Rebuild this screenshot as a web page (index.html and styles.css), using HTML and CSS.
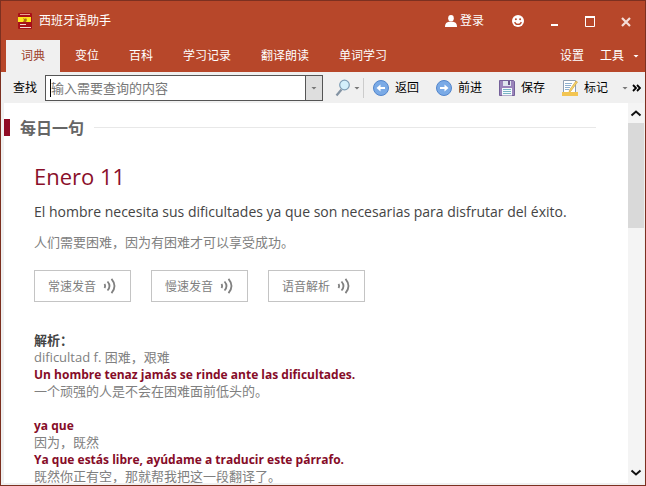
FILE: index.html
```html
<!DOCTYPE html>
<html lang="zh-CN">
<head>
<meta charset="utf-8">
<title>西班牙语助手</title>
<link rel="stylesheet" href="styles.css">
</head>
<body>
<div class="window">
  <header class="titlebar">
    <svg class="logo" width="14" height="16" viewBox="0 0 14 16" aria-hidden="true"><rect width="14" height="16" rx="1" fill="#a80f18"/><path d="M2 1.500h10" stroke="#e8a090"/><rect y="4" width="13" height="5" fill="#ffe51c"/><path d="M5 5l2 1 1-1 1 2-1 2H5l1-2z" fill="#b06a12"/><path d="M2 11.500h6M2 14.500h11" stroke="#f3d8d0"/></svg>
    <h1 class="app-name">西班牙语助手</h1>
    <button class="login" type="button"><svg width="12" height="12" viewBox="0 0 12 12" aria-hidden="true"><ellipse cx="6" cy="3.200" rx="2.800" ry="3.200" fill="#fff"/><path d="M0 12c0-4 2-5 4-5.300h4c2 .3 4 1.300 4 5.300z" fill="#fff"/></svg>登录</button>
    <div class="controls">
      <button type="button" aria-label="反馈"><svg width="12" height="12" viewBox="0 0 12 12"><circle cx="6" cy="6" r="6" fill="#fff"/><circle cx="3.900" cy="4.300" r="1" fill="#b7472a"/><circle cx="8.100" cy="4.300" r="1" fill="#b7472a"/><path d="M2.700 7c.8 3.200 5.800 3.200 6.600 0" fill="none" stroke="#b7472a" stroke-width="1.200"/></svg></button>
      <button type="button" aria-label="最小化"><svg width="12" height="12" viewBox="0 0 12 12"><path d="M3 10h7" stroke="#fff" stroke-width="2"/></svg></button>
      <button type="button" aria-label="最大化"><svg width="12" height="12" viewBox="0 0 12 12"><path d="M1.500 2v9.500h9V2" fill="none" stroke="#fff"/><path d="M1 2h10" stroke="#fff" stroke-width="2"/></svg></button>
      <button type="button" aria-label="关闭"><svg width="12" height="12" viewBox="0 0 12 12"><path d="M2 3l8 8M10 3l-8 8" stroke="#f5ded8" stroke-width="2.200"/></svg></button>
    </div>
  </header>
  <nav class="tabs">
    <a class="tab active" href="#dict">词典</a>
    <a class="tab" href="#verb">变位</a>
    <a class="tab" href="#wiki">百科</a>
    <a class="tab" href="#log">学习记录</a>
    <a class="tab" href="#read">翻译朗读</a>
    <a class="tab" href="#words">单词学习</a>
    <div class="menu">
      <button type="button">设置</button>
      <button type="button">工具<span class="caret light"></span></button>
    </div>
  </nav>
  <div class="toolbar">
    <label for="query">查找</label>
    <div class="combo">
      <span class="cursor"></span>
      <input id="query" type="text" placeholder="输入需要查询的内容">
      <button type="button" aria-label="历史"><span class="caret"></span></button>
    </div>
    <button class="search" type="button" aria-label="搜索"><svg width="16" height="18" viewBox="0 0 16 18"><path d="M6.500 10.500L1.500 16.500" stroke="#8393a3" stroke-width="2.200"/><circle cx="9.500" cy="6" r="4.800" fill="#d3effb" stroke="#7e9db5" stroke-width="1.200"/></svg><span class="caret"></span></button>
    <div class="actions">
      <button type="button"><svg width="16" height="16" viewBox="0 0 16 16" aria-hidden="true"><circle cx="8" cy="8" r="7.500" fill="#7aaae6" stroke="#5285cb"/><path d="M3.500 8l4-3.500V7H12v2H7.500v2.500z" fill="#fff"/></svg>返回</button>
      <button type="button"><svg width="16" height="16" viewBox="0 0 16 16" aria-hidden="true"><circle cx="8" cy="8" r="7.500" fill="#7aaae6" stroke="#5285cb"/><path d="M12.500 8l-4-3.500V7H4v2h4.500v2.500z" fill="#fff"/></svg>前进</button>
      <button type="button"><svg width="16" height="16" viewBox="0 0 16 16" aria-hidden="true"><path d="M.5.5h14l1 1v14H.5z" fill="#9a84bb" stroke="#74619a"/><path d="M4 1h8v5H4z" fill="#dfe6ee"/><path d="M9 1h2v4H9z" fill="#67578a"/><path d="M3 8h10v7.500H3z" fill="#f4fbfd"/><path d="M4 9.500h8M4 11.500h8M4 13.500h8" stroke="#79b4c4"/></svg>保存</button>
      <button type="button"><svg width="16" height="16" viewBox="0 0 16 16" aria-hidden="true"><path d="M1.500.5h12v12h-12z" fill="#fff" stroke="#8f9fb3"/><path d="M3 3.500h7M3 5.500h6M3 7.500h5M3 9.500h4" stroke="#8fb0cf"/><path d="M14 1l1.500 1L9 11l-2 1.500.5-2.500z" fill="#f8d666" stroke="#c99b3c" stroke-width=".6"/><path d="M0 12h16v4H0z" fill="#f3c552"/></svg>标记</button>
    </div>
    <button class="overflow" type="button" aria-label="更多"><span class="caret"></span><svg width="9" height="8" viewBox="0 0 9 8"><path d="M1 1l3 3-3 3M5 1l3 3-3 3" fill="none" stroke="#000" stroke-width="1.800"/></svg></button>
  </div>
  <div class="pane">
    <main class="content">
      <div class="section-head"><h2>每日一句</h2></div>
      <article>
        <h3 class="date">Enero 11</h3>
        <p class="quote" lang="es">El hombre necesita sus dificultades ya que son necesarias para disfrutar del éxito.</p>
        <p class="translation">人们需要困难，因为有困难才可以享受成功。</p>
        <div class="sounds">
          <button type="button">常速发音<svg width="14" height="16" viewBox="0 0 14 16" aria-hidden="true"><g fill="none" stroke="#808080" stroke-width="1.800"><path d="M1.500 6q1.200 2 0 4M4.500 3.500q4 4.500 0 9M8.500.8q6 7.200 0 14.400"/></g></svg></button>
          <button type="button">慢速发音<svg width="14" height="16" viewBox="0 0 14 16" aria-hidden="true"><g fill="none" stroke="#808080" stroke-width="1.800"><path d="M1.500 6q1.200 2 0 4M4.500 3.500q4 4.500 0 9M8.500.8q6 7.200 0 14.400"/></g></svg></button>
          <button type="button">语音解析<svg width="14" height="16" viewBox="0 0 14 16" aria-hidden="true"><g fill="none" stroke="#808080" stroke-width="1.800"><path d="M1.500 6q1.200 2 0 4M4.500 3.500q4 4.500 0 9M8.500.8q6 7.200 0 14.400"/></g></svg></button>
        </div>
        <div class="notes">
          <h4>解析：</h4>
          <p>dificultad f. 困难，艰难</p>
          <p class="example" lang="es">Un hombre tenaz jamás se rinde ante las dificultades.</p>
          <p>一个顽强的人是不会在困难面前低头的。</p>
        </div>
        <div class="notes">
          <p class="example" lang="es">ya que</p>
          <p>因为，既然</p>
          <p class="example" lang="es">Ya que estás libre, ayúdame a traducir este párrafo.</p>
          <p>既然你正有空，那就帮我把这一段翻译了。</p>
        </div>
      </article>
    </main>
    <div class="scrollbar" aria-hidden="true">
      <svg width="16" height="20" viewBox="0 0 16 20"><path d="M3.500 12.500L8 8.500l4.500 4" fill="none" stroke="#111" stroke-width="2"/></svg>
      <div class="track"><div class="thumb"></div></div>
      <svg width="16" height="20" viewBox="0 0 16 20"><path d="M3.500 7.500L8 11.500l4.500-4" fill="none" stroke="#111" stroke-width="2"/></svg>
    </div>
  </div>
</div>
</body>
</html>
```
FILE: styles.css
```css
* { box-sizing: border-box; }
body {
  margin: 0;
  font: 12px/16px "Open Sans", "Noto Sans CJK SC", sans-serif;
}
h1, h2, h3, h4, p { margin: 0; }
button {
  display: flex;
  align-items: center;
  padding: 0;
  border: 0;
  background: none;
  color: inherit;
  font: inherit;
}
.window {
  display: flex;
  flex-direction: column;
  height: 100vh;
  border: 1px solid #7c3020;
  background: #f0f0f0;
}
.titlebar {
  display: flex;
  flex: none;
  align-items: center;
  height: 39px;
  padding: 0 13px 0 17px;
  background: #b7472a;
  color: #fff;
}
.app-name {
  margin-left: 7px;
  font-size: 12px;
  font-weight: 400;
}
.login { gap: 3px; margin-left: auto; }
.controls { display: flex; gap: 24px; margin-left: 28px; }
.tabs {
  display: flex;
  flex: none;
  height: 32px;
  padding: 0 6px 0 5px;
  background: #b7472a;
}
.tab {
  display: flex;
  align-items: center;
  padding: 0 15px;
  color: #fff;
  text-decoration: none;
}
.tab.active { background: #f0f0f0; color: #9d4028; }
.menu {
  display: flex;
  gap: 16px;
  margin-left: auto;
  color: #fff;
}
.caret {
  width: 6px;
  height: 3px;
  background: #777;
  clip-path: polygon(0 0, 100% 0, 50% 100%);
}
.caret.light { margin-left: 9px; background: #fff; }
.toolbar {
  display: flex;
  flex: none;
  align-items: center;
  height: 31px;
  padding: 1px 4px 0 12px;
  color: #000;
}
.combo {
  display: flex;
  align-items: center;
  flex: 1;
  min-width: 80px;
  height: 26px;
  margin-left: 8px;
  border: 1px solid #555;
  background: #fff;
}
.cursor { width: 1px; height: 18px; margin-left: 4px; background: #000; }
.combo input {
  flex: 1;
  min-width: 0;
  height: 100%;
  padding: 0;
  border: 0;
  outline: 0;
  background: none;
  font: inherit;
  font-size: 13px;
}
.combo input::placeholder { color: #777; opacity: 1; }
.combo button {
  justify-content: center;
  width: 17px;
  height: 100%;
  border-left: 1px solid #555;
  background: #dedede;
}
.search {
  gap: 3px;
  height: 20px;
  margin-left: 12px;
  padding-right: 3px;
  border-right: 1px solid #ccc;
}
.actions { display: flex; gap: 17px; margin-left: 9px; }
.actions button { gap: 6px; }
.overflow { gap: 4px; margin-left: 14px; }
.pane {
  display: flex;
  flex: 1;
  min-height: 0;
  margin: 0 1px 2px 3px;
  background: #fff;
}
.content {
  flex: 1;
  min-width: 0;
  overflow: hidden;
  padding-top: 16px;
}
.section-head {
  display: flex;
  align-items: center;
  gap: 10px;
  height: 17px;
  margin-right: 32px;
}
.section-head::before { content: ""; width: 6px; height: 17px; background: #900b24; }
.section-head::after { content: ""; flex: 1; height: 1px; background: #e8e8e8; }
h2 { color: #666; font-size: 16px; font-weight: 700; }
article { padding: 23px 0 0 30px; color: #808080; font-size: 13px; line-height: 17px; }
.date { color: #8a0f2a; font-size: 22px; font-weight: 400; line-height: 34px; }
.quote {
  margin-top: 7px;
  color: #444;
  font-size: 14px;
  line-height: 24px;
}
.translation { margin-top: 8px; line-height: 20px; }
.sounds { display: flex; gap: 20px; margin: 18px 0 30px; }
.sounds button {
  gap: 7px;
  height: 32px;
  padding: 0 13px;
  border: 1px solid #c4c4c4;
  font-size: 12px;
}
.notes + .notes { margin-top: 17px; }
h4 { color: #444; font-size: 13px; }
.example { color: #860c28; font-size: 12px; font-weight: 700; }
.scrollbar { display: flex; flex-direction: column; width: 16px; background: #f4f4f4; }
.scrollbar svg { flex: none; }
.track { flex: 1; }
.thumb { height: 31%; background: #d9d9d9; }
```
